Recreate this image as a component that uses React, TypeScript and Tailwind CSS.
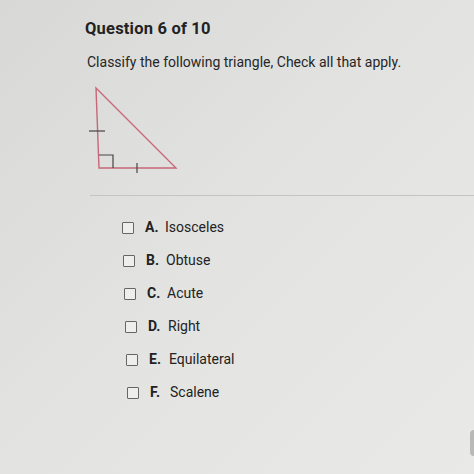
import React from 'react';

const options = [
  { letter: 'A.', label: 'Isosceles', shift: 'ml-[122px]' },
  { letter: 'B.', label: 'Obtuse', shift: 'ml-[123px]' },
  { letter: 'C.', label: 'Acute', shift: 'ml-[124px]' },
  { letter: 'D.', label: 'Right', shift: 'ml-[125px]' },
  { letter: 'E.', label: 'Equilateral', shift: 'ml-[126px]' },
  { letter: 'F.', label: 'Scalene', shift: 'ml-[127px]' },
];

const Triangle = () => (
  <svg width="110" height="100" viewBox="80 80 110 100" className="block">
    <polygon points="96,88 99,168 176,168" fill="none" stroke="#c7677a" strokeWidth="1.4" />
    <line x1="89" y1="131" x2="105" y2="131" stroke="#444" strokeWidth="1.2" />
    <polyline points="99,155 113,155 113,168" fill="none" stroke="#444" strokeWidth="1.2" />
    <line x1="137" y1="163" x2="137" y2="173" stroke="#444" strokeWidth="1.2" />
  </svg>
);

const App = () => {
  return (
    <div
      className="relative w-[474px] h-[474px] overflow-hidden bg-gradient-to-br from-[#d8d9d7] via-[#e3e4e2] to-[#e9eae8] text-[#222]"
      style={{ fontFamily: 'Roboto, "Liberation Sans", sans-serif' }}
    >
      <div className="pl-[85px] pt-[18px]">
        <h1 className="text-[16.5px] font-bold leading-[22px] tracking-[0.2px]">Question 6 of 10</h1>
        <p className="mt-[12px] pl-[2px] text-[14px] leading-[20px] text-[#262626]">
          Classify the following triangle, Check all that apply.
        </p>
      </div>
      <div className="mt-[8px] ml-[80px]">
        <Triangle />
      </div>
      <div className="mt-[15px] ml-[90px] h-px bg-[#c4c5c3]" />
      <ul className="mt-[15px] flex flex-col">
        {options.map((o) => (
          <li key={o.letter} className={`${o.shift} flex h-[33px] items-center`}>
            <span className="h-[12px] w-[12px] border-[1.5px] border-[#666] rounded-[1px] bg-[#eeeeec]" />
            <span className="ml-[11px] w-[20px] text-[14px] font-bold">{o.letter}</span>
            <span className="text-[14px]">{o.label}</span>
          </li>
        ))}
      </ul>
      <div className="absolute right-0 top-[430px] h-[26px] w-[4px] rounded-l bg-[#b9bab8]" />
    </div>
  );
};

export default App;
